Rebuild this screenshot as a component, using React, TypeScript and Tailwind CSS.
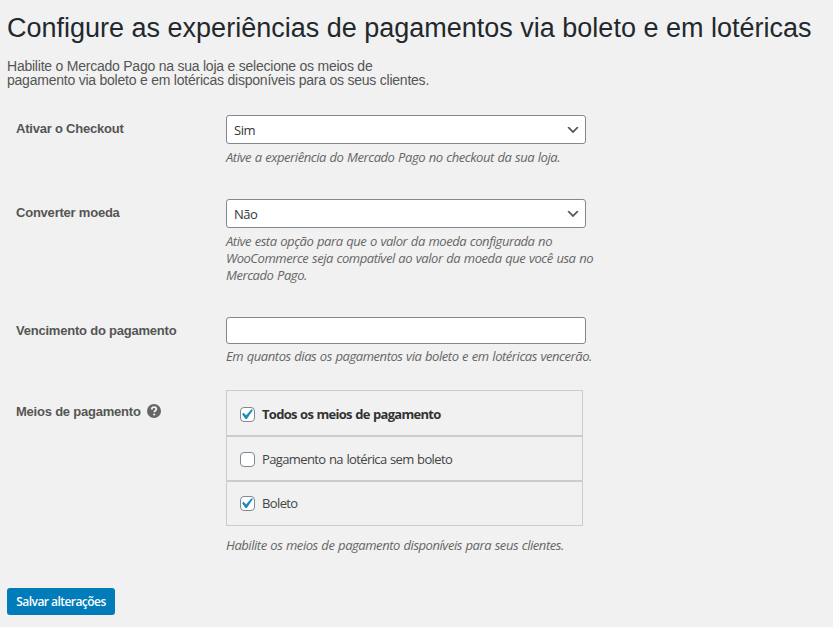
import { useState } from 'react';
import type { ReactNode } from 'react';
import clsx from 'clsx';

const METHODS = [
  { id: 'all', label: 'Todos os meios de pagamento' },
  { id: 'lottery', label: 'Pagamento na lotérica sem boleto' },
  { id: 'boleto', label: 'Boleto' },
];

function HelpTip() {
  return (
    <svg viewBox="0 0 14 14" className="mb-px ml-1.5 size-3.5" aria-hidden="true">
      <circle cx="7" cy="7" r="7" fill="#666" />
      <path d="M4.8 5.4c0-1.4 1-2.2 2.3-2.2s2.2.8 2.2 1.9c0 1.6-2 1.6-2 3.1" fill="none" stroke="#f1f1f1" strokeWidth="1.8" />
      <circle cx="7.2" cy="10.5" r="1.1" fill="#f1f1f1" />
    </svg>
  );
}

function Row({ label, help, className, children }: { label: string; help?: boolean; className: string; children: ReactNode }) {
  return (
    <div className={clsx('flex', className)}>
      <div className="flex h-[27px] w-[219px] shrink-0 items-center pl-[9px] font-['Liberation_Sans',sans-serif] text-[13px] font-bold whitespace-nowrap text-[#555]">
        <span className="tracking-[-0.22px]">{label}</span>
        {help && <HelpTip />}
      </div>
      <div>{children}</div>
    </div>
  );
}

function Description({ children, className }: { children: ReactNode; className?: string }) {
  return (
    <p className={clsx('text-[13px] leading-[17px] tracking-[-0.45px] [word-spacing:0.7px] whitespace-nowrap text-[#666] italic', className)}>
      {children}
    </p>
  );
}

function Select({ options, initial }: { options: string[]; initial: string }) {
  return (
    <div className="relative h-[29px] w-[360px]">
      <select
        defaultValue={initial}
        className="h-full w-full appearance-none rounded-[3px] border border-[#7e8993] bg-white px-[7px] pt-[2px] text-[13px] tracking-[-0.5px] text-[#32373c]"
      >
        {options.map((o) => (
          <option key={o}>{o}</option>
        ))}
      </select>
      <svg viewBox="0 0 20 20" className="pointer-events-none absolute top-[7px] right-[5px] size-4">
        <path d="M5 6l5 5 5-5 2 1-7 7-7-7 2-1z" fill="#555" />
      </svg>
    </div>
  );
}

function Checkbox({ checked, onChange }: { checked: boolean; onChange: () => void }) {
  return (
    <span className="relative size-[15px] shrink-0">
      <input
        type="checkbox"
        checked={checked}
        onChange={onChange}
        className="block size-full appearance-none rounded-[4px] border border-[#7e8993] bg-white"
      />
      {checked && (
        <svg viewBox="0 0 20 20" className="pointer-events-none absolute -top-[3px] -left-[4px] size-[21px]">
          <path d="M14.83 4.89l1.34.94-5.81 8.38H9.02L5.78 9.67l1.34-1.25 2.57 2.4z" fill="#1e8cbe" />
        </svg>
      )}
    </span>
  );
}

export default function App() {
  const [selected, setSelected] = useState<string[]>(['all', 'boleto']);

  const toggle = (id: string) => {
    setSelected((prev) => (prev.includes(id) ? prev.filter((v) => v !== id) : [...prev, id]));
  };

  return (
    <main className="h-[627px] w-[833px] overflow-hidden bg-[#f1f1f1] pl-[7px] font-['Open_Sans','Noto_Sans',sans-serif]">
      <h1 className="pt-[12px] font-['Liberation_Sans',sans-serif] text-[27px] leading-8 whitespace-nowrap text-[#23282d]">
        Configure as experiências de pagamentos via boleto e em lotéricas
      </h1>
      <p className="mt-[15px] font-['Liberation_Sans',sans-serif] text-[14px] leading-[14px] tracking-[-0.23px] whitespace-nowrap text-[#555]">
        Habilite o Mercado Pago na sua loja e selecione os meios de
        <br />
        pagamento via boleto e em lotéricas disponíveis para os seus clientes.
      </p>

      <Row label="Ativar o Checkout" className="mt-7 h-[84px]">
        <Select options={['Sim', 'Não']} initial="Sim" />
        <Description className="mt-[5px]">Ative a experiência do Mercado Pago no checkout da sua loja.</Description>
      </Row>

      <Row label="Converter moeda" className="h-[118px]">
        <Select options={['Sim', 'Não']} initial="Não" />
        <Description className="mt-[5px]">
          Ative esta opção para que o valor da moeda configurada no
          <br />
          WooCommerce seja compatível ao valor da moeda que você usa no
          <br />
          Mercado Pago.
        </Description>
      </Row>

      <Row label="Vencimento do pagamento" className="h-[73px]">
        <input type="text" className="block h-[27px] w-[360px] rounded-[3px] border border-[#7e8993] bg-white px-2 text-[13px]" />
        <Description className="mt-[4px]">Em quantos dias os pagamentos via boleto e em lotéricas vencerão.</Description>
      </Row>

      <div className="h-[198px]">
        <Row label="Meios de pagamento" help className="pt-[8px]">
          <div className="-mt-[8px] w-[357px] divide-y-2 divide-[#ccc] border border-[#ccc]">
            {METHODS.map((m) => (
              <label
                key={m.id}
                className="flex h-[45px] items-center pt-[2px] pl-[13px] text-[13px] text-[#444] first:h-[46px] first:pt-[3px] last:h-[43px] last:pt-0"
              >
                <Checkbox checked={selected.includes(m.id)} onChange={() => toggle(m.id)} />
                <span
                  className={clsx(
                    'ml-[7px] [word-spacing:0.7px] whitespace-nowrap',
                    m.id === 'all' ? 'font-bold tracking-[-0.72px] text-[#333]' : 'tracking-[-0.62px]',
                  )}
                >
                  {m.label}
                </span>
              </label>
            ))}
          </div>
          <Description className="mt-[11px]">Habilite os meios de pagamento disponíveis para seus clientes.</Description>
        </Row>
      </div>

      <button type="button" className="h-[27px] w-[108px] rounded-[3px] bg-[#007cba] pt-px text-[12px] font-semibold tracking-[-0.55px] whitespace-nowrap text-white">
        Salvar alterações
      </button>
    </main>
  );
}
